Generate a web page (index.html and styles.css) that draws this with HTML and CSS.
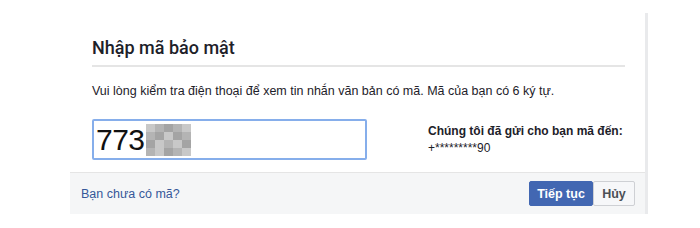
FILE: index.html
```html
<!DOCTYPE html>
<html lang="vi">
<head>
    <meta charset="UTF-8">
    <title>Nhập mã bảo mật</title>
    <link rel="stylesheet" href="styles.css">
</head>
<body>
    <div class="dialog">
        <div class="dialog-body">
            <div class="dialog-title">Nhập mã bảo mật</div>
            <div class="dialog-text">Vui lòng kiểm tra điện thoại để xem tin nhắn văn bản có mã. Mã của bạn có 6 ký tự.</div>
            <div class="code-row">
                <div class="code-input">
                    <span class="code-value">773</span>
                    <span class="blur">
                        <i class="c2"></i><i class="c1"></i><i class="c3"></i><i class="c1"></i><i class="c2"></i>
                        <i class="c1"></i><i class="c3"></i><i class="c2"></i><i class="c3"></i><i class="c1"></i>
                        <i class="c3"></i><i class="c2"></i><i class="c1"></i><i class="c2"></i><i class="c3"></i>
                        <i class="c1"></i><i class="c2"></i><i class="c3"></i><i class="c1"></i><i class="c2"></i>
                    </span>
                </div>
                <div class="sent-to">
                    <div class="sent-label">Chúng tôi đã gửi cho bạn mã đến:</div>
                    <div class="sent-number">+*********90</div>
                </div>
            </div>
        </div>
        <div class="dialog-footer">
            <a class="no-code" href="#">Bạn chưa có mã?</a>
            <div class="buttons">
                <button class="btn btn-primary" type="button">Tiếp tục</button>
                <button class="btn btn-cancel" type="button">Hủy</button>
            </div>
        </div>
    </div>
</body>
</html>
```

FILE: styles.css
```css
* {
    margin: 0;
    padding: 0;
    box-sizing: border-box;
}
body {
    font: 12px "Liberation Sans", Arial, sans-serif;
    color: #1d2129;
    background: #fff;
}

/***************************************************/

.dialog {
    margin: 13px 0 0 70px;
    width: 578px;
    border-right: 3px solid #e9eaec;
    background: #fff;
}
.dialog-body {
    padding: 24px 20px 12px 22px;
}
.dialog-title {
    font: 500 18px Roboto, "Liberation Sans", sans-serif;
    color: #1d2129;
    padding-bottom: 7px;
    border-bottom: 2px solid #e5e5e5;
}
.dialog-text {
    font-size: 12.5px;
    padding-top: 17px;
}

/*********************/

.code-row {
    display: flex;
    align-items: flex-start;
    margin-top: 21px;
}
.code-input {
    display: flex;
    align-items: center;
    width: 275px;
    height: 41px;
    border: 2px solid #86aeeb;
    border-radius: 2px;
    padding-left: 2px;
}
.code-value {
    font-size: 30px;
    color: #111;
    letter-spacing: -0.5px;
}
.blur {
    display: grid;
    grid-template-columns: repeat(5, 9px);
    grid-auto-rows: 8px;
    margin-left: 1px;
}
.blur i {
    display: block;
}
.c1 { background: #b4b4b4; }
.c2 { background: #c8c8c8; }
.c3 { background: #a4a4a4; }

.sent-to {
    margin-left: 61px;
    padding-top: 4px;
    line-height: 17px;
}
.sent-label {
    font-weight: bold;
}

/*********************/

.dialog-footer {
    display: flex;
    align-items: center;
    justify-content: space-between;
    height: 42px;
    padding: 0 10px 0 11px;
    background: #f5f6f7;
    border-top: 1px solid #e5e5e5;
}
.no-code {
    color: #365899;
    text-decoration: none;
    font-size: 12.5px;
}
.buttons {
    display: flex;
}
.btn {
    font: bold 12.5px "Liberation Sans", Arial, sans-serif;
    height: 25px;
    padding: 0 4px;
    border-radius: 2px;
    white-space: nowrap;
}
.btn-primary {
    background: #4267b2;
    border: 1px solid #4267b2;
    color: #fff;
    width: 64px;
}
.btn-cancel {
    background: #f6f7f9;
    border: 1px solid #ced0d4;
    color: #4b4f56;
    width: 42px;
}
```
